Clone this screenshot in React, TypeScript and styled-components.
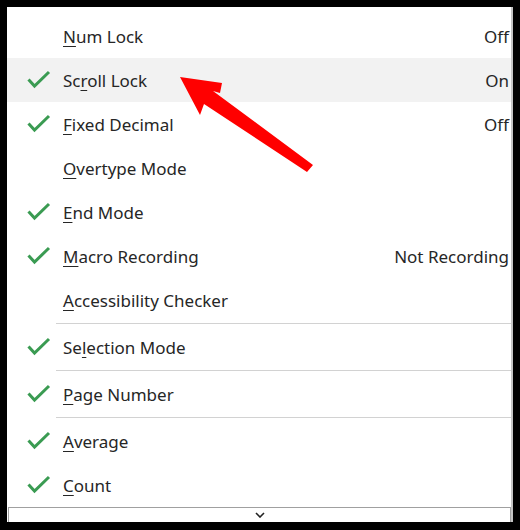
import React from 'react';
import styled, { createGlobalStyle } from 'styled-components';

const GlobalStyle = createGlobalStyle`
  html, body {
    margin: 0;
    padding: 0;
    background: #000;
  }
`;

type Item = {
  label: string;
  key: number;
  checked?: boolean;
  value?: string;
  active?: boolean;
  separatorAfter?: boolean;
};

const items: Item[] = [
  { label: 'Num Lock', key: 0, value: 'Off' },
  { label: 'Scroll Lock', key: 2, checked: true, value: 'On', active: true },
  { label: 'Fixed Decimal', key: 0, checked: true, value: 'Off' },
  { label: 'Overtype Mode', key: 0 },
  { label: 'End Mode', key: 0, checked: true },
  { label: 'Macro Recording', key: 0, checked: true, value: 'Not Recording' },
  { label: 'Accessibility Checker', key: 0, separatorAfter: true },
  { label: 'Selection Mode', key: 2, checked: true, separatorAfter: true },
  { label: 'Page Number', key: 0, checked: true, separatorAfter: true },
  { label: 'Average', key: 0, checked: true },
  { label: 'Count', key: 0, checked: true },
];

const Check = () => (
  <svg width="26" height="20" viewBox="0 0 26 20">
    <path
      d="M2.5 9.5 L8.5 16 L23 2"
      fill="none"
      stroke="#3a9b52"
      strokeWidth="3"
      strokeLinecap="butt"
      strokeLinejoin="miter"
    />
  </svg>
);

const Chevron = () => (
  <svg width="10" height="6" viewBox="0 0 10 6">
    <path d="M1 1 L5 5 L9 1" fill="none" stroke="#222" strokeWidth="1.6" />
  </svg>
);

const App = () => {
  return (
    <>
      <GlobalStyle />
      <Frame>
        <Panel>
          <Menu>
            {items.map((item) => (
              <React.Fragment key={item.label}>
                <Row $active={item.active}>
                  <CheckCell>{item.checked ? <Check /> : null}</CheckCell>
                  <Label>
                    {item.label.slice(0, item.key)}
                    <u>{item.label.charAt(item.key)}</u>
                    {item.label.slice(item.key + 1)}
                  </Label>
                  {item.value ? <Value>{item.value}</Value> : null}
                </Row>
                {item.separatorAfter ? <Separator /> : null}
              </React.Fragment>
            ))}
          </Menu>
          <ScrollDown>
            <Chevron />
          </ScrollDown>
          <Arrow width="160" height="120" viewBox="0 0 160 120">
            <polygon
              points="0,0 42,6 40,16 33,14 133,88 127,95 24,27 20,38"
              fill="#ff0000"
            />
          </Arrow>
        </Panel>
      </Frame>
    </>
  );
};

export default App;

const Frame = styled.div`
  width: 520px;
  height: 530px;
  box-sizing: border-box;
  padding: 7px 7px 8px 7px;
  background: #000;
  display: flex;
`;

const Panel = styled.div`
  position: relative;
  flex: 1;
  background: #fff;
  border-right: 2px solid #c4c4c4;
  display: flex;
  flex-direction: column;
  overflow: hidden;
`;

const Menu = styled.div`
  flex: 1;
  padding-top: 7px;
  display: flex;
  flex-direction: column;
`;

const Row = styled.div<{ $active?: boolean }>`
  height: 44px;
  flex: none;
  display: flex;
  align-items: center;
  background: ${(p) => (p.$active ? '#f2f2f2' : 'transparent')};
  font-family: 'Noto Sans', 'Open Sans', sans-serif;
  font-size: 17px;
  color: #262626;
`;

const CheckCell = styled.div`
  width: 56px;
  flex: none;
  display: flex;
  align-items: center;
  padding-left: 19px;
  box-sizing: border-box;
`;

const Label = styled.span`
  flex: 1;
  white-space: nowrap;

  u {
    text-decoration-thickness: 1px;
    text-underline-offset: 3px;
  }
`;

const Value = styled.span`
  white-space: nowrap;
  padding-right: 2px;
`;

const Separator = styled.div`
  height: 3px;
  flex: none;
  margin-left: 49px;
  display: flex;
  align-items: center;

  &::after {
    content: '';
    flex: 1;
    height: 1px;
    background: #d2d2d2;
  }
`;

const ScrollDown = styled.div`
  height: 15px;
  flex: none;
  box-sizing: border-box;
  border: 1px solid #a0a0a0;
  border-bottom: none;
  margin: 0 0 0 1px;
  display: flex;
  align-items: center;
  justify-content: center;
`;

const Arrow = styled.svg`
  position: absolute;
  left: 173px;
  top: 70px;
  pointer-events: none;
`;
